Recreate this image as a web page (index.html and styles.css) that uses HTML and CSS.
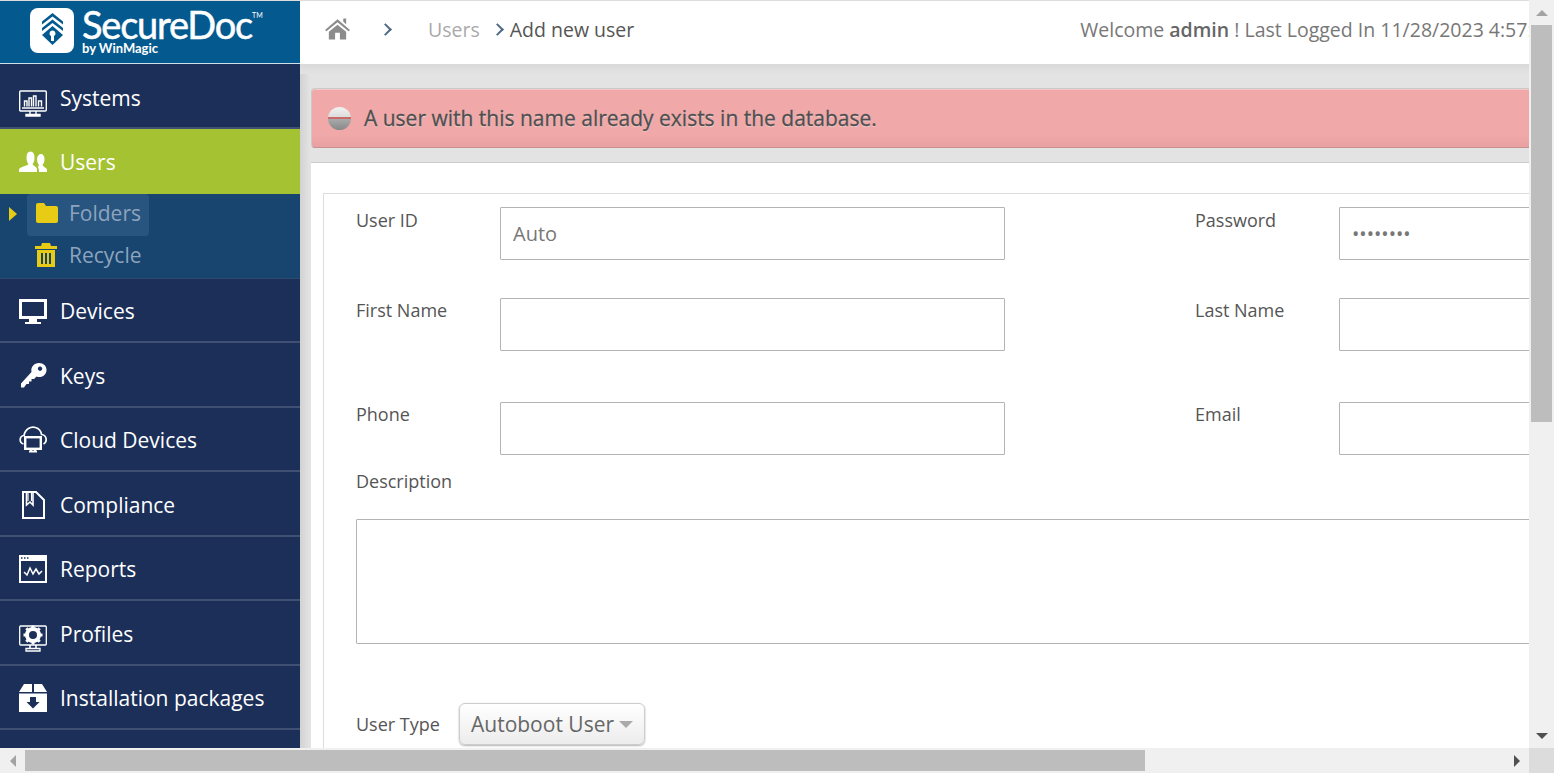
FILE: index.html
```html
<!DOCTYPE html>
<html lang="en">
<head>
    <meta charset="UTF-8">
    <meta name="viewport" content="width=device-width, initial-scale=1.0">
    <title>SecureDoc - Add new user</title>
    <link rel="stylesheet" href="styles.css">
</head>
<body>
<div class="window">
    <div class="page">
        <!-- Sidebar -->
        <aside class="sidebar">
            <div class="logo">
                <svg class="logo-mark" viewBox="0 0 44 45">
                    <rect width="44" height="45" rx="8" fill="#fff"/>
                    <path d="M22.5 5 L33 13.5 V16.5 L22.5 8.5 L12 16.5 V13.5 Z M22.5 11.5 L33 20 V23 L22.5 15 L12 23 V20 Z" fill="#045a8f"/>
                    <path fill-rule="evenodd" d="M22.5 18 L33 27 L22.5 37 L12 27 Z M22.5 22.5 a3 3 0 0 0 -1.5 5.6 V33 H24 V28.1 A3 3 0 0 0 22.5 22.5 Z" fill="#045a8f"/>
                </svg>
                <div class="logo-text">
                    <div class="logo-name">SecureDoc<sup>TM</sup></div>
                    <div class="logo-by">by WinMagic</div>
                </div>
            </div>
            <nav>
                <a class="nav-item nav-item-tall">
                    <svg class="nav-icon icon-systems" viewBox="0 0 28 28" fill="none" stroke="#fff" stroke-width="1.4">
                        <rect x="0.7" y="1" width="26.6" height="20" rx="1"/>
                        <path d="M3 18 H25 M5.5 16.5 V11 H8 V16.5 M10 16.5 V8 H12.5 V16.5 M14.5 16.5 V6 H17 V16.5 M19.5 16.5 V11 H22.5 V16.5"/>
                        <path d="M11 21 V24 M17 21 V24 M7 26 H21 V24.5 H7 Z"/>
                    </svg>
                    Systems
                </a>
                <a class="nav-item nav-item-tall nav-item-active">
                    <svg class="nav-icon" viewBox="0 0 28 28" fill="#fff">
                        <path d="M5 24 H18 V21 C18 19 14.5 18 13.5 16 C15 14.5 15.5 12.5 15.5 9.5 C15.5 5.5 14 3.5 11.5 3.5 C9 3.5 7.5 5.5 7.5 9.5 C7.5 12.5 8 14.5 9.5 16 C8.5 18 0 19 0 21.5 V24 Z"/>
                        <path d="M20 24 H28 V21.5 C28 20 24.5 19 23.5 17 C24.5 16 25.5 14 25.5 11 C25.5 8 24 6 22 6 C20 6 18 8 18 11 C18 14 19 16 20 17 C19.5 18 18.5 18.5 19.5 20.5 C20 21.5 20 23 20 24 Z"/>
                    </svg>
                    Users
                </a>
                <div class="subnav">
                    <a class="sub-item sub-item-current">
                        <span class="sub-arrow"></span>
                        <svg class="sub-icon" viewBox="0 0 22 20" fill="#e8cb14">
                            <path d="M0 2 Q0 0 2 0 H8 L10 3 H20 Q22 3 22 5 V18 Q22 20 20 20 H2 Q0 20 0 18 Z"/>
                        </svg>
                        Folders
                    </a>
                    <a class="sub-item">
                        <svg class="sub-icon sub-icon-trash" viewBox="0 0 22 24" fill="#e8cb14">
                            <path fill-rule="evenodd" d="M7 0 H15 L16 3 H22 V6 H0 V3 H6 Z M2 7 H20 V24 H2 Z M6 10 V21 H8 V10 Z M10 10 V21 H12 V10 Z M14 10 V21 H16 V10 Z"/>
                        </svg>
                        Recycle
                    </a>
                </div>
                <a class="nav-item">
                    <svg class="nav-icon" viewBox="0 0 28 28" fill="#fff">
                        <path fill-rule="evenodd" d="M0 2 H28 V22 H0 Z M3 5 V19 H25 V5 Z M10 22 H18 V25 H22 V27 H6 V25 H10 Z"/>
                    </svg>
                    Devices
                </a>
                <a class="nav-item">
                    <svg class="nav-icon" viewBox="0 0 28 28" fill="#fff">
                        <path fill-rule="evenodd" d="M20 1 C24.5 1 27.5 4 27.5 8 C27.5 13 22.5 16.5 17.5 14.5 L15 17 H12.5 V19.5 H10 V22 H7.5 L5 25.5 H2 V21.5 L12.5 10 C11.5 5 15 1 20 1 Z M21 4.5 a2.2 2.2 0 1 0 0.1 0 Z"/>
                    </svg>
                    Keys
                </a>
                <a class="nav-item">
                    <svg class="nav-icon" viewBox="0 0 28 28" fill="none" stroke="#fff" stroke-width="1.7">
                        <path d="M4.5 18 C0 17 0 10 5 9.5 C6 3 12 0 16.5 1.5 C20 2.5 22 5 22.5 8.5 C28 9 28.5 16 24.5 18"/>
                        <rect x="6.2" y="11.2" width="15.6" height="11.6" stroke-width="2.4"/>
                        <path d="M10 25.5 H18 M12 23 V25 M16 23 V25" stroke-width="2"/>
                    </svg>
                    Cloud Devices
                </a>
                <a class="nav-item">
                    <svg class="nav-icon" viewBox="0 0 28 28" fill="none" stroke="#fff" stroke-width="2">
                        <path d="M4 1 H17 L25 9 V27 H4 Z"/>
                        <path d="M7.5 2 V14 L11 11 L14 14 V2" stroke-width="1.6"/>
                        <path d="M9 2 V10 M12.5 2 V10" stroke-width="1.2"/>
                    </svg>
                    Compliance
                </a>
                <a class="nav-item">
                    <svg class="nav-icon" viewBox="0 0 28 28">
                        <rect width="28" height="28" fill="#fff"/>
                        <rect x="2" y="6" width="24" height="20" fill="#1b2f59"/>
                        <path d="M2 3 H3.5 M5 3 H6.5 M8 3 H9.5" stroke="#1b2f59" stroke-width="1.4"/>
                        <path d="M5 17 L8 20 L11 13 L14 19 L17 14 L20 19 L23 16" fill="none" stroke="#fff" stroke-width="1.5"/>
                    </svg>
                    Reports
                </a>
                <a class="nav-item">
                    <svg class="nav-icon icon-profiles" viewBox="0 0 28 28">
                        <rect x="0.7" y="2" width="26.6" height="19" rx="1" fill="none" stroke="#fff" stroke-width="1.3"/>
                        <circle cx="14" cy="11" r="6" fill="none" stroke="#fff" stroke-width="4"/>
                        <path d="M14 1.5 V20.5 M4.5 11 H23.5 M7.3 4.3 L20.7 17.7 M20.7 4.3 L7.3 17.7" stroke="#fff" stroke-width="3" stroke-dasharray="3.4 12.2"/>
                        <path d="M11 21 V24 M17 21 V24" stroke="#fff" stroke-width="1.6"/>
                        <path d="M7 24.5 H21 V27 H7 Z" fill="none" stroke="#fff" stroke-width="1.3"/>
                    </svg>
                    Profiles
                </a>
                <a class="nav-item">
                    <svg class="nav-icon" viewBox="0 0 28 28" fill="#fff">
                        <path fill-rule="evenodd" d="M5 0 H13 V8 H0 Z M15 0 H23 L28 8 H15 Z M0 9.5 H28 V28 H0 Z M11 13 V18 H7.5 L14 24.5 L20.5 18 H17 V13 Z"/>
                    </svg>
                    Installation packages
                </a>
            </nav>
        </aside>

        <!-- Main content -->
        <main class="main">
            <header class="topbar">
                <svg class="home-icon" viewBox="0 0 26 24" fill="#8c8c8c">
                    <path d="M13 3 L26 14 L24.5 15.5 L13 6 L1.5 15.5 L0 14 Z M19 2 H22 V8 L19 5.5 Z M4 16 L13 8.5 L22 16 V24 H15.5 V17 H10.5 V24 H4 Z"/>
                </svg>
                <span class="crumb-sep crumb-sep-first"></span>
                <span class="crumb-link">Users</span>
                <span class="crumb-sep"></span>
                <span class="crumb-current">Add new user</span>
                <span class="welcome">Welcome <b>admin</b> ! Last Logged In 11/28/2023 4:57:</span>
            </header>

            <div class="content">
                <div class="alert">
                    <span class="alert-icon"></span>
                    A user with this name already exists in the database.
                </div>

                <div class="panel">
                    <form class="form-box">
                        <div class="form-row form-row-first">
                            <label>User ID</label>
                            <input type="text" placeholder="Auto">
                            <label class="label-right">Password</label>
                            <input type="password" value="password">
                        </div>
                        <div class="form-row form-row-second">
                            <label>First Name</label>
                            <input type="text">
                            <label class="label-right">Last Name</label>
                            <input type="text">
                        </div>
                        <div class="form-row">
                            <label>Phone</label>
                            <input type="text">
                            <label class="label-right">Email</label>
                            <input type="text">
                        </div>
                        <label class="desc-label">Description</label>
                        <textarea class="desc-input"></textarea>
                        <div class="type-row">
                            <label>User Type</label>
                            <button type="button" class="select-btn">Autoboot User<span class="select-caret"></span></button>
                        </div>
                    </form>
                </div>
            </div>
        </main>
    </div>

    <!-- Scrollbars -->
    <div class="vbar">
        <div class="sb-btn"><span class="arrow-up"></span></div>
        <div class="vthumb"></div>
        <div class="sb-btn sb-btn-end"><span class="arrow-down"></span></div>
    </div>
    <div class="hbar">
        <div class="sb-btn"><span class="arrow-left"></span></div>
        <div class="hthumb"></div>
        <div class="sb-btn sb-btn-end"><span class="arrow-right"></span></div>
    </div>
    <div class="corner"></div>
</div>
</body>
</html>
```

FILE: styles.css
```css
html, body {
    margin: 0;
    height: 100%;
    overflow: hidden;
}
body {
    font-family: "Open Sans", Arial, sans-serif;
    color: #555;
    background: #fff;
}
.window {
    display: grid;
    grid-template-columns: 1fr 25px;
    grid-template-rows: 1fr 25px;
    width: 1554px;
    height: 773px;
}
.page {
    display: flex;
    overflow: hidden;
    border-top: 1px solid #ddd;
    min-width: 0;
}

/* Sidebar */
.sidebar {
    flex: none;
    width: 300px;
    height: 800px;
    background: #1b2f59;
}
.logo {
    display: flex;
    box-sizing: border-box;
    height: 63px;
    padding: 7px 0 0 30px;
    background: #045a8f;
    border-bottom: 1px solid #cfe0ea;
}
.logo-mark {
    width: 44px;
    height: 45px;
}
.logo-text {
    margin-left: 8px;
    color: #fff;
}
.logo-name {
    font-family: Lato, "Open Sans", sans-serif;
    font-size: 38px;
    line-height: 32px;
    letter-spacing: -1.2px;
    white-space: nowrap;
    -webkit-text-stroke: 0.5px #fff;
}
.logo-name sup {
    font-size: 7px;
    line-height: 0;
    letter-spacing: 0;
    vertical-align: 21px;
    -webkit-text-stroke: 0;
}
.logo-by {
    font-family: Lato, "Open Sans", sans-serif;
    font-weight: 700;
    font-size: 13px;
    line-height: 16px;
}
.nav-item {
    display: flex;
    align-items: center;
    box-sizing: border-box;
    height: 64.5px;
    padding: 3px 0 0 19px;
    color: #fff;
    font-size: 21px;
    border-bottom: 2px solid #3f5072;
}
.nav-item-tall {
    height: 65px;
    padding-top: 5px;
}
.nav-item-active {
    padding-top: 1px;
    background: #a4c232;
    border-bottom: none;
}
.nav-icon {
    flex: none;
    width: 28px;
    height: 28px;
    margin-right: 13px;
}
.icon-systems {
    margin-top: 11px;
}
.icon-profiles {
    margin-top: 9px;
}
.subnav {
    box-sizing: border-box;
    height: 84.5px;
    background: #17456f;
    border-bottom: 1px solid #2c4a70;
}
.sub-item {
    position: relative;
    display: flex;
    align-items: center;
    box-sizing: border-box;
    height: 42px;
    margin-left: 27px;
    padding: 0 0 5px 9px;
    color: #8ea3bd;
    font-size: 21px;
}
.sub-item-current {
    width: 122px;
    background: #28557f;
    border-radius: 4px;
}
.sub-arrow {
    position: absolute;
    left: -18px;
    top: 13px;
    border-left: 8px solid #e8cb14;
    border-top: 7px solid transparent;
    border-bottom: 7px solid transparent;
}
.sub-icon {
    flex: none;
    width: 22px;
    height: 22px;
    margin-right: 11px;
}
.sub-icon-trash {
    height: 24px;
    margin-left: -1px;
    margin-right: 12px;
}

/* Main */
.main {
    flex: none;
    width: 1900px;
    background: #e3e3e3;
}
.topbar {
    display: flex;
    align-items: center;
    box-sizing: border-box;
    height: 63px;
    padding: 0 0 6px 25px;
    background: #fff;
    font-size: 19.5px;
    white-space: nowrap;
}
.home-icon {
    flex: none;
    width: 25px;
    height: 24px;
    margin-bottom: 4px;
}
.crumb-sep {
    width: 7px;
    height: 7px;
    margin: 0 8px 0 0;
    border-top: 2px solid #4f6a85;
    border-right: 2px solid #4f6a85;
    transform: rotate(45deg);
}
.crumb-sep-first {
    margin: 0 38px 0 31px;
}
.crumb-link {
    color: #aaa;
    margin-right: 13px;
}
.crumb-current {
    color: #555;
}
.welcome {
    margin-left: 446px;
    color: #777;
}
.welcome b {
    font-weight: 600;
    color: #666;
}
.content {
    padding: 24px 0 0 11px;
    height: 700px;
    background-color: #e3e3e3;
    background-image: linear-gradient(#d9d9d9, #e3e3e3 10px), linear-gradient(to right, #d2d2d2, #e3e3e3);
    background-size: 100% 10px, 10px 100%;
    background-repeat: no-repeat;
}
.alert {
    display: flex;
    align-items: center;
    box-sizing: border-box;
    height: 60px;
    padding-left: 16px;
    background: linear-gradient(#f0a8a8 80%, #e9a0a0);
    border: 1px solid #c9c9c9;
    border-bottom-color: #c99090;
    border-radius: 4px 0 0 4px;
    box-shadow: inset 0 1px 0 #f6c9c9;
    font-size: 21px;
    color: #4f4f4f;
    text-shadow: 0 1px 1px rgba(255, 255, 255, 0.55);
    -webkit-text-stroke: 0.3px #4f4f4f;
}
.alert-icon {
    flex: none;
    width: 23px;
    height: 23px;
    margin-right: 13px;
    border-radius: 50%;
    background: linear-gradient(#f2f2f2 0, #ddd 42%, #c86a6a 42%, #c86a6a 52%, #aaa 52%, #888 100%);
}
.panel {
    margin-top: 14px;
    padding: 30px 0 0 12px;
    height: 700px;
    background: #fff;
    border-top: 1px solid #ccc;
}
.form-box {
    box-sizing: border-box;
    height: 680px;
    padding: 13px 0 0 32px;
    border-top: 1px solid #ddd;
    border-left: 1px solid #ddd;
    font-size: 18px;
}
.form-row {
    display: grid;
    grid-template-columns: 144px 505px 190px 144px 505px;
}
.form-row-first {
    margin-bottom: 38px;
}
.form-row-second {
    margin-bottom: 51px;
}
.form-row label {
    line-height: 27px;
}
.form-row + .form-row label {
    margin-top: -1px;
}
.label-right {
    grid-column: 4;
}
input {
    box-sizing: border-box;
    height: 53px;
    padding: 0 12px;
    border: 1px solid #b4b4b4;
    border-radius: 1px;
    font-family: inherit;
    font-size: 20px;
    color: #777;
    outline: none;
}
input[type="password"] {
    font-size: 19.5px;
}
input::placeholder {
    color: #777;
    opacity: 1;
}
.desc-label {
    display: block;
    margin-top: 12px;
    line-height: 28px;
}
.desc-input {
    display: block;
    box-sizing: border-box;
    width: 1300px;
    height: 125px;
    margin-top: 24px;
    border: 1px solid #b4b4b4;
    border-radius: 1px;
    outline: none;
    resize: none;
}
.type-row {
    display: flex;
    align-items: center;
    margin-top: 59px;
}
.type-row label {
    width: 103px;
}
.select-btn {
    display: flex;
    align-items: center;
    box-sizing: border-box;
    width: 186px;
    height: 42px;
    padding: 0 0 0 11px;
    background: linear-gradient(#fff, #ececec);
    border: 1px solid #ccc;
    border-radius: 6px;
    box-shadow: 0 1px 2px rgba(0, 0, 0, 0.3);
    font-family: inherit;
    font-size: 21px;
    color: #666;
}
.select-caret {
    margin-left: 5px;
    border-top: 7px solid #aaa;
    border-left: 7px solid transparent;
    border-right: 7px solid transparent;
}

/* Scrollbars */
.vbar, .hbar {
    display: flex;
    background: #f0f0f0;
}
.vbar {
    flex-direction: column;
}
.sb-btn {
    display: flex;
    flex: none;
    align-items: center;
    justify-content: center;
    width: 25px;
    height: 25px;
}
.sb-btn-end {
    margin: auto 0 0 auto;
}
.vthumb {
    width: 21px;
    height: 397px;
    margin-left: 2px;
    background: #bdbdbd;
}
.hthumb {
    width: 1120px;
    height: 21px;
    margin-top: 2px;
    background: #bdbdbd;
}
.arrow-up {
    border-bottom: 6px solid #a3a3a3;
    border-left: 6px solid transparent;
    border-right: 6px solid transparent;
}
.arrow-down {
    border-top: 6px solid #505050;
    border-left: 6px solid transparent;
    border-right: 6px solid transparent;
}
.arrow-left {
    border-right: 6px solid #a3a3a3;
    border-top: 6px solid transparent;
    border-bottom: 6px solid transparent;
}
.arrow-right {
    border-left: 6px solid #505050;
    border-top: 6px solid transparent;
    border-bottom: 6px solid transparent;
}
.corner {
    background: #dcdcdc;
}
```
